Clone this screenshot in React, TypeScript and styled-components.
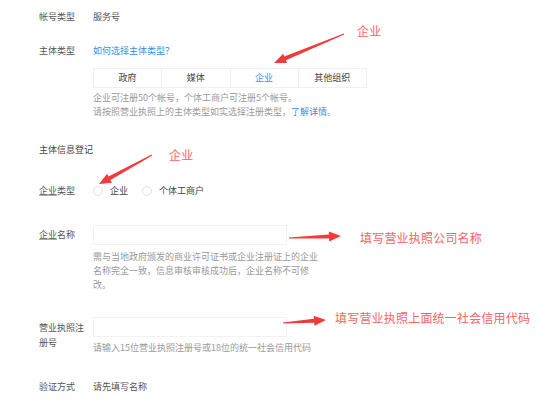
import React from 'react';
import styled, { createGlobalStyle } from 'styled-components';

const GlobalStyle = createGlobalStyle`
  html, body {
    margin: 0;
    padding: 0;
    background: #ffffff;
  }
  body {
    font-family: "Noto Sans CJK SC", "Liberation Sans", sans-serif;
  }
`;

const Page = styled.div`
  position: relative;
  width: 554px;
  height: 418px;
  padding: 10px 0 0 39px;
  box-sizing: border-box;
  overflow: hidden;
  font-size: 9px;
  line-height: 14px;
  color: #555;
`;

const Row = styled.div<{ $top: number }>`
  display: flex;
  align-items: flex-start;
  margin-top: ${(p) => p.$top}px;
`;

const Label = styled.div<{ $lh?: number; $pad?: number }>`
  width: 48px;
  margin-right: 6px;
  flex-shrink: 0;
  color: #555;
  line-height: ${(p) => p.$lh ?? 14}px;
  padding-top: ${(p) => p.$pad ?? 0}px;
`;

const Mark = styled.span`
  text-decoration: underline;
  text-decoration-color: #aaa;
`;

const Content = styled.div`
  display: flex;
  flex-direction: column;
`;

const Value = styled.div`
  color: #555;
`;

const Link = styled.a`
  color: #3b8de8;
  text-decoration: none;
`;

const Tabs = styled.div`
  display: flex;
  margin-top: 10px;
  border: 1px solid #f0f0f0;
  width: 272px;
  height: 18px;
`;

const Tab = styled.div<{ $active?: boolean }>`
  flex: 1;
  display: flex;
  align-items: center;
  justify-content: center;
  color: ${(p) => (p.$active ? '#3b8de8' : '#444')};
  border-left: 1px solid #f0f0f0;
  &:first-child {
    border-left: none;
  }
`;

const Help = styled.div<{ $top: number; $width?: number }>`
  color: #9a9a9a;
  margin-top: ${(p) => p.$top}px;
  width: ${(p) => (p.$width ? `${p.$width}px` : 'auto')};
`;

const Section = styled.div`
  margin-top: 24px;
  color: #444;
`;

const Radios = styled.div`
  display: flex;
  align-items: center;
  gap: 14px;
  height: 14px;
`;

const RadioItem = styled.label`
  display: flex;
  align-items: center;
  gap: 7px;
  color: #444;
`;

const RadioDot = styled.span`
  width: 8px;
  height: 8px;
  border-radius: 50%;
  border: 1px solid #e2e2e2;
  background: #fff;
`;

const Input = styled.div`
  width: 192px;
  height: 18px;
  border: 1px solid #f2f2f2;
  background: #fff;
`;

const Note = styled.span<{ $x: number; $y: number }>`
  position: absolute;
  left: ${(p) => p.$x}px;
  top: ${(p) => p.$y}px;
  font-size: 12px;
  line-height: 14px;
  color: #f76464;
  white-space: nowrap;
  letter-spacing: 0.2px;
`;

const Overlay = styled.svg`
  position: absolute;
  left: 0;
  top: 0;
  pointer-events: none;
`;

type ArrowProps = { x1: number; y1: number; x2: number; y2: number };

const Arrow = ({ x1, y1, x2, y2 }: ArrowProps) => {
  const dx = x2 - x1;
  const dy = y2 - y1;
  const len = Math.hypot(dx, dy);
  const ux = dx / len;
  const uy = dy / len;
  const nx = -uy;
  const ny = ux;
  const head = 12;
  const bx = x2 - ux * head;
  const by = y2 - uy * head;
  const pts = `${x1 + nx * 0.6},${y1 + ny * 0.6} ${bx + nx * 2},${by + ny * 2} ${bx + nx * 5},${by + ny * 5} ${x2},${y2} ${bx - nx * 5},${by - ny * 5} ${bx - nx * 2},${by - ny * 2} ${x1 - nx * 0.6},${y1 - ny * 0.6}`;
  return <polygon points={pts} fill="#f23a3a" />;
};

const App = () => {
  return (
    <>
      <GlobalStyle />
      <Page>
        <Row $top={0}>
          <Label>帐号类型</Label>
          <Value>服务号</Value>
        </Row>
        <Row $top={20}>
          <Label>主体类型</Label>
          <Content>
            <Link>如何选择主体类型？</Link>
            <Tabs>
              <Tab>政府</Tab>
              <Tab>媒体</Tab>
              <Tab $active>企业</Tab>
              <Tab>其他组织</Tab>
            </Tabs>
            <Help $top={3}>
              企业可注册50个帐号，个体工商户可注册5个帐号。
              <br />
              请按照营业执照上的主体类型如实选择注册类型，<Link>了解详情</Link>。
            </Help>
          </Content>
        </Row>
        <Section>主体信息登记</Section>
        <Row $top={27}>
          <Label>
            <Mark>企业</Mark>类型
          </Label>
          <Radios>
            <RadioItem>
              <RadioDot />
              企业
            </RadioItem>
            <RadioItem>
              <RadioDot />
              个体工商户
            </RadioItem>
          </Radios>
        </Row>
        <Row $top={27}>
          <Label $lh={20}>
            <Mark>企业</Mark>名称
          </Label>
          <Content>
            <Input />
            <Help $top={5} $width={232}>
              需与当地政府颁发的商业许可证书或企业注册证上的企业名称完全一致，信息审核审核成功后，企业名称不可修改。
            </Help>
          </Content>
        </Row>
        <Row $top={25}>
          <Label $lh={15} $pad={3}>
            营业执照注册号
          </Label>
          <Content>
            <Input />
            <Help $top={4}>请输入15位营业执照注册号或18位的统一社会信用代码</Help>
          </Content>
        </Row>
        <Row $top={25}>
          <Label>验证方式</Label>
          <Value>请先填写名称</Value>
        </Row>

        <Overlay width={554} height={418} viewBox="0 0 554 418">
          <Arrow x1={344} y1={34} x2={274} y2={63} />
          <Arrow x1={152} y1={155} x2={99} y2={184} />
          <Arrow x1={289} y1={238} x2={341} y2={236} />
          <Arrow x1={283} y1={323} x2={326} y2={320} />
        </Overlay>
        <Note $x={357} $y={24}>企业</Note>
        <Note $x={169} $y={148}>企业</Note>
        <Note $x={360} $y={231}>填写营业执照公司名称</Note>
        <Note $x={335} $y={311}>填写营业执照上面统一社会信用代码</Note>
      </Page>
    </>
  );
};

export default App;
